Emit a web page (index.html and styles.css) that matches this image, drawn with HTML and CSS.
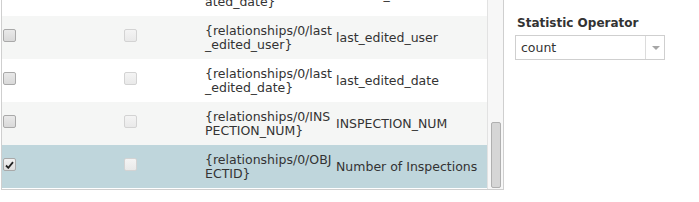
FILE: index.html
```html
<!DOCTYPE html>
<html lang="en">
<head>
    <meta charset="UTF-8">
    <title>Statistic fields</title>
    <link rel="stylesheet" href="styles.css">
</head>
<body>
    <div class="page">
        <div class="panel">
            <div class="list">
                <div class="rows">
                    <div class="row">
                        <div class="cell"><span class="cb"></span></div>
                        <div class="cell"><span class="cb disabled"></span></div>
                        <div class="cell expr">{relationships/0/created_date}</div>
                        <div class="cell field">created_date</div>
                    </div>
                    <div class="row alt">
                        <div class="cell"><span class="cb"></span></div>
                        <div class="cell"><span class="cb disabled"></span></div>
                        <div class="cell expr">{relationships/0/last_edited_user}</div>
                        <div class="cell field">last_edited_user</div>
                    </div>
                    <div class="row">
                        <div class="cell"><span class="cb"></span></div>
                        <div class="cell"><span class="cb disabled"></span></div>
                        <div class="cell expr">{relationships/0/last_edited_date}</div>
                        <div class="cell field">last_edited_date</div>
                    </div>
                    <div class="row alt">
                        <div class="cell"><span class="cb"></span></div>
                        <div class="cell"><span class="cb disabled"></span></div>
                        <div class="cell expr">{relationships/0/INSPECTION_NUM}</div>
                        <div class="cell field">INSPECTION_NUM</div>
                    </div>
                    <div class="row selected">
                        <div class="cell">
                            <span class="cb checked">
                                <svg width="9" height="8" viewBox="0 0 9 8"><path d="M1 4.5 L3.3 6.8 L8 1.2" fill="none" stroke="#222" stroke-width="1.8"/></svg>
                            </span>
                        </div>
                        <div class="cell"><span class="cb disabled"></span></div>
                        <div class="cell expr">{relationships/0/OBJECTID}</div>
                        <div class="cell field">Number of Inspections</div>
                    </div>
                </div>
            </div>
            <div class="scrollbar">
                <div class="thumb"></div>
            </div>
        </div>

        <div class="options">
            <div class="label">Statistic Operator</div>
            <div class="select">
                <span class="select-value">count</span>
                <span class="select-arrow"></span>
            </div>
        </div>
    </div>
</body>
</html>
```

FILE: styles.css
```css
* {
    margin: 0;
    padding: 0;
    box-sizing: border-box;
}

body {
    font-family: "DejaVu Sans", Verdana, sans-serif;
    font-size: 12.5px;
    color: #333;
    background: #fff;
}

.page {
    display: flex;
    align-items: flex-start;
}

.panel {
    display: flex;
    width: 503px;
    height: 190px;
    margin-left: 1px;
    border: 1px solid #cfcfcf;
    border-top: none;
    overflow: hidden;
}

.list {
    flex: 1;
    overflow: hidden;
}

.rows {
    margin-top: -27px;
}

.row {
    display: grid;
    grid-template-columns: 121px 82px 131px 1fr;
    height: 43px;
    background: #fff;
}

.row.alt {
    background: #f5f6f5;
}

.row.selected {
    background: #bfd6dc;
}

.cell {
    display: flex;
    align-items: center;
}

.expr {
    display: block;
    padding-top: 8px;
    line-height: 14px;
    word-break: break-all;
}

.cb {
    display: flex;
    align-items: center;
    justify-content: center;
    align-self: flex-start;
    width: 13px;
    height: 13px;
    margin: 13px 0 0 1px;
    border: 1px solid #a9a9a9;
    border-radius: 2px;
    background: linear-gradient(#e9e9e9, #d9d9d9);
}

.cb.disabled {
    border-color: #d3d3d3;
    background: linear-gradient(#f4f4f4, #e9e9e9);
}

.cb.checked {
    background: linear-gradient(#f2f2f2, #dedede);
}

.scrollbar {
    width: 16px;
    background: #f7f7f7;
    border-left: 1px solid #e2e2e2;
}

.thumb {
    width: 10px;
    height: 66px;
    margin: 122px 0 0 3px;
    background: #d6d6d6;
    border: 1px solid #b0b0b0;
    border-radius: 2px;
}

.options {
    margin-left: 11px;
    padding-top: 16px;
}

.label {
    padding-left: 2px;
    font-size: 12px;
    font-weight: bold;
    line-height: 14px;
    color: #333;
}

.select {
    display: flex;
    align-items: center;
    width: 150px;
    height: 25px;
    margin-top: 5px;
    border: 1px solid #cfcfcf;
    background: #fff;
}

.select-value {
    flex: 1;
    padding-left: 5px;
}

.select-arrow {
    position: relative;
    width: 19px;
    height: 100%;
    border-left: 1px solid #dcdcdc;
}

.select-arrow::after {
    content: "";
    position: absolute;
    left: 6px;
    top: 10px;
    border-left: 4px solid transparent;
    border-right: 4px solid transparent;
    border-top: 4px solid #a6a6a6;
}
```
